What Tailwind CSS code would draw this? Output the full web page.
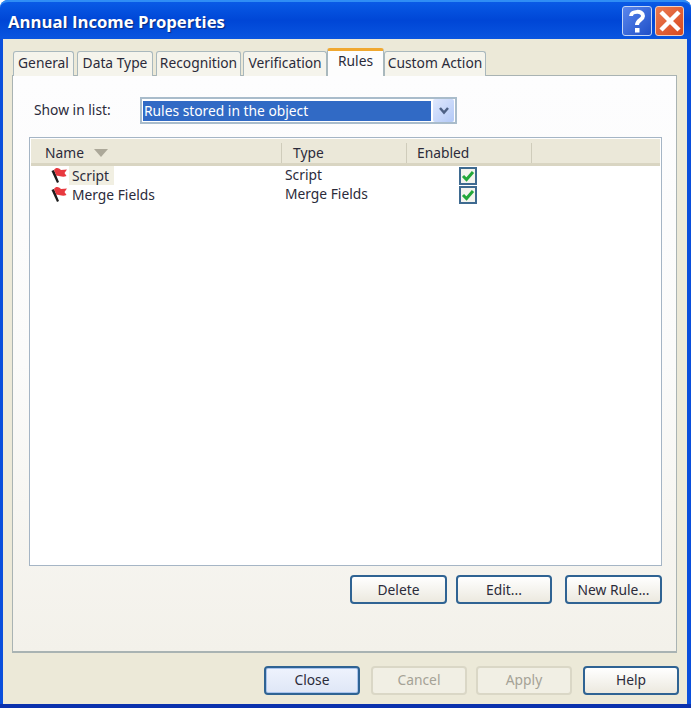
<!DOCTYPE html>
<html lang="en">
  <head>
    <meta charset="UTF-8" />
    <script src="https://cdn.jsdelivr.net/npm/@tailwindcss/browser@4"></script>
    <title>Annual Income Properties</title>
  </head>
  <body class="w-[691px] h-[708px] overflow-hidden bg-white font-['Noto_Sans',sans-serif] text-[13.8px] text-[#2b2b3a]">
    <div class="w-[691px] h-[708px] flex flex-col rounded-t-lg bg-[#0a4fdc] border-b-4 border-b-[#0a31ad]">
      <header class="h-[39px] shrink-0 flex justify-between items-center pl-2 pr-[7px] rounded-t-lg border-t-2 border-t-[#2f8df5] bg-gradient-to-b from-[#0a5ae6] via-[#0046d6] to-[#0a55e0]">
        <div class="pt-[3px] font-['Open_Sans',sans-serif] font-bold text-[16.7px] text-white [text-shadow:1px_1px_1px_#0a2a80]">Annual Income Properties</div>
        <div class="flex gap-[3px]">
          <div class="w-[30px] h-[30px] rounded-[3px] border border-[#c5d6f5] bg-gradient-to-br from-[#5a86ec] to-[#1f4fc8] flex items-center justify-center">
            <svg width="20" height="26" viewBox="0 0 20 26"><path d="M4 8 C4 3 16 2 16 8 C16 12 10 12 10 17" fill="none" stroke="#fff" stroke-width="4"/><rect x="8" y="20" width="4.500" height="4.500" fill="#fff"/></svg>
          </div>
          <div class="w-[29px] h-[30px] rounded-[3px] border border-[#f0d0c0] bg-gradient-to-br from-[#ea7a50] to-[#d8481c] flex items-center justify-center">
            <svg width="24" height="24" viewBox="0 0 24 24"><path d="M3 3 L21 21 M21 3 L3 21" stroke="#fff" stroke-width="4.500" fill="none"/></svg>
          </div>
        </div>
      </header>
      <main class="flex-1 ml-[3px] mr-[4px] bg-[#ece9d8] pl-[9px] pr-[10px] pt-[9px] flex flex-col">
        <nav class="h-[28px] shrink-0 flex items-end pl-[1px] relative z-10 -mb-px">
          <div class="w-[61px] h-[25px] pb-[2px] flex items-center justify-center bg-[#f5f4ec] border border-b-0 border-[#a9b8bd] rounded-t-[3px]">General</div>
          <div class="ml-[3px] w-[76px] h-[25px] pb-[2px] flex items-center justify-center bg-[#f5f4ec] border border-b-0 border-[#a9b8bd] rounded-t-[3px]">Data Type</div>
          <div class="ml-[3px] w-[85px] h-[25px] pb-[2px] flex items-center justify-center bg-[#f5f4ec] border border-b-0 border-[#a9b8bd] rounded-t-[3px]">Recognition</div>
          <div class="ml-[2px] w-[84px] h-[25px] pb-[2px] flex items-center justify-center bg-[#f5f4ec] border border-b-0 border-[#a9b8bd] rounded-t-[3px]">Verification</div>
          <div class="w-[57px] h-[28px] pb-[4px] flex items-center justify-center bg-[#fdfdfd] border-x border-[#a9b8bd] border-t-[3px] border-t-[#f0a830] rounded-t-[3px]">Rules</div>
          <div class="w-[102px] h-[25px] pb-[2px] flex items-center justify-center bg-[#f5f4ec] border border-b-0 border-[#a9b8bd] rounded-t-[3px]">Custom Action</div>
        </nav>
        <section class="h-[578px] shrink-0 border border-[#a9b3b3] border-b-2 bg-gradient-to-b from-[#fdfdfe] via-[#fbfbfa] to-[#f3f1ea] pl-[16px] pr-[14px] pt-[21px]">
          <div class="flex items-center h-[27px]">
            <label class="w-[111px] pl-[5px]">Show in list:</label>
            <div class="w-[317px] h-[27px] border-2 border-[#a9bccb] bg-white flex items-center p-[1px]">
              <div class="w-[288px] h-[20px] bg-[#316ac5] text-white pl-[1px] leading-[20px]">Rules stored in the object</div>
              <div class="ml-[2px] w-[21px] h-[23px] rounded-[2px] bg-gradient-to-br from-[#dfe8fd] to-[#b3c9f7] flex items-center justify-center">
                <svg width="12" height="10" viewBox="0 0 12 10"><path d="M2 2 L6 6.500 L10 2" fill="none" stroke="#4d6185" stroke-width="2.500"/></svg>
              </div>
            </div>
          </div>
          <div class="mt-[13px] h-[429px] border border-[#a5b5c5] bg-white pt-px px-px">
            <div class="h-[27px] pt-[4px] flex items-center bg-[#ebe8d9] border-b-[3px] border-b-[#d9d5c2] text-[#2b2b3a]">
              <div class="w-[251px] h-[20px] flex items-center pl-[14px] border-r border-[#cfccbb]">
                Name
                <svg class="ml-[10px]" width="14" height="8" viewBox="0 0 14 8"><path d="M0 0 H14 L7 8 Z" fill="#aca899"/></svg>
              </div>
              <div class="w-[125px] h-[20px] flex items-center pl-[11px] border-r border-[#cfccbb]">Type</div>
              <div class="w-[125px] h-[20px] flex items-center pl-[10px] border-r border-[#cfccbb]">Enabled</div>
            </div>
            <div class="flex items-center h-[19px]">
              <div class="w-[251px] flex items-center pl-[20px]">
                <svg width="17" height="17" viewBox="0 0 17 17"><path d="M0.500 4 L3 3 L8 15 L6 16 Z" fill="#1c1c1c"/><path d="M3 3 C5 0 8 1 10 3 L16 2.500 L13.500 6 L15.500 9 C11 11 8 8 5.500 9 Z" fill="#e8393f"/></svg>
                <span class="ml-[1px] pl-[3px] pr-[5px] bg-[#f1efe2] leading-[19px]">Script</span>
              </div>
              <div class="w-[125px] pl-[3px]">Script</div>
              <div class="w-[125px] flex pl-[52px]">
                <div class="w-[18px] h-[18px] border-2 border-[#3e6a90] bg-[#f4f4ee] flex items-center justify-center">
                  <svg width="14" height="14" viewBox="0 0 14 14"><path d="M2 7 L5.500 10.500 L12 3" fill="none" stroke="#22a83a" stroke-width="3"/></svg>
                </div>
              </div>
            </div>
            <div class="flex items-center h-[19px]">
              <div class="w-[251px] flex items-center pl-[20px]">
                <svg width="17" height="17" viewBox="0 0 17 17"><path d="M0.500 4 L3 3 L8 15 L6 16 Z" fill="#1c1c1c"/><path d="M3 3 C5 0 8 1 10 3 L16 2.500 L13.500 6 L15.500 9 C11 11 8 8 5.500 9 Z" fill="#e8393f"/></svg>
                <span class="ml-[1px] pl-[3px] pr-[5px] leading-[19px]">Merge Fields</span>
              </div>
              <div class="w-[125px] pl-[3px]">Merge Fields</div>
              <div class="w-[125px] flex pl-[52px]">
                <div class="w-[18px] h-[18px] border-2 border-[#3e6a90] bg-[#f4f4ee] flex items-center justify-center">
                  <svg width="14" height="14" viewBox="0 0 14 14"><path d="M2 7 L5.500 10.500 L12 3" fill="none" stroke="#22a83a" stroke-width="3"/></svg>
                </div>
              </div>
            </div>
          </div>
          <div class="mt-[9px] flex justify-end">
            <button class="w-[97px] h-[29px] pt-px rounded-[4px] border-2 border-[#2f6393] bg-gradient-to-b from-white to-[#ece9df]">Delete</button>
            <button class="ml-[9px] w-[96px] h-[29px] pt-px rounded-[4px] border-2 border-[#2f6393] bg-gradient-to-b from-white to-[#ece9df]">Edit...</button>
            <button class="ml-[13px] w-[97px] h-[29px] pt-px rounded-[4px] border-2 border-[#2f6393] bg-gradient-to-b from-white to-[#ece9df]">New Rule...</button>
          </div>
        </section>
        <footer class="mt-[13px] flex justify-end -mr-[2px]">
          <button class="w-[96px] h-[29px] rounded-[4px] border-2 border-[#2f6393] bg-gradient-to-b from-[#eef3fd] to-[#dfe6f6] shadow-[inset_0_0_0_1px_#a9c4ee]">Close</button>
          <button class="ml-[11px] w-[96px] h-[29px] rounded-[4px] border-2 border-[#dad7c6] bg-[#f1efe4] text-[#a5a296]">Cancel</button>
          <button class="ml-[9px] w-[96px] h-[29px] rounded-[4px] border-2 border-[#dad7c6] bg-[#f1efe4] text-[#a5a296]">Apply</button>
          <button class="ml-[11px] w-[96px] h-[29px] rounded-[4px] border-2 border-[#2f6393] bg-gradient-to-b from-white to-[#ece9df]">Help</button>
        </footer>
      </main>
    </div>
  </body>
</html>
